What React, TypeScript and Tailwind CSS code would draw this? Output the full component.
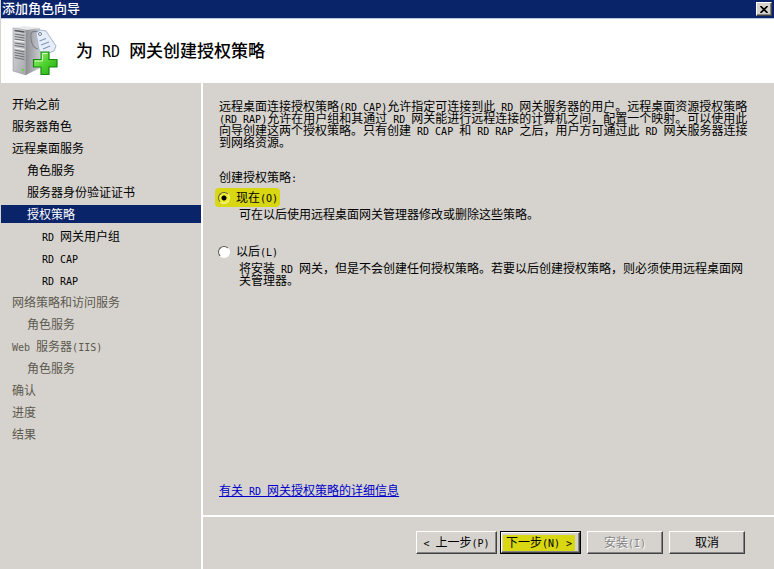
import { useState, type ReactNode } from "react";

const steps = [
  { label: "开始之前", level: 0, state: "done" },
  { label: "服务器角色", level: 0, state: "done" },
  { label: "远程桌面服务", level: 0, state: "done" },
  { label: "角色服务", level: 1, state: "done" },
  { label: "服务器身份验证证书", level: 1, state: "done" },
  { label: "授权策略", level: 1, state: "current" },
  { label: "RD 网关用户组", level: 2, state: "done" },
  { label: "RD CAP", level: 2, state: "done" },
  { label: "RD RAP", level: 2, state: "done" },
  { label: "网络策略和访问服务", level: 0, state: "pending" },
  { label: "角色服务", level: 1, state: "pending" },
  { label: "Web 服务器(IIS)", level: 0, state: "pending" },
  { label: "角色服务", level: 1, state: "pending" },
  { label: "确认", level: 0, state: "pending" },
  { label: "进度", level: 0, state: "pending" },
  { label: "结果", level: 0, state: "pending" },
];

const indents = ["pl-[11px]", "pl-[26px]", "pl-[41px]"];

const stateStyles: Record<string, string> = {
  done: "text-black",
  current: "bg-[#0a246a] text-white",
  pending: "text-[#5c594f]",
};

// Sets Latin runs in a fixed-width face, half as wide as a Chinese character.
function Mixed({ children, latin = "text-[10px]" }: { children: string; latin?: string }) {
  return (
    <>
      {children.split(/([\x20-\x7e]+)/).map((run, i) =>
        i % 2 ? (
          <span key={i} className={`font-['DejaVu_Sans_Mono',monospace] leading-2 ${latin}`}>
            {run}
          </span>
        ) : (
          run
        ),
      )}
    </>
  );
}

function ServerIcon() {
  return (
    <svg width="48" height="50" viewBox="0 0 48 50" aria-hidden="true">
      <defs>
        <linearGradient id="front" x1="0" x2="1" y1="0" y2="1">
          <stop offset="0" stopColor="#dcdde0" />
          <stop offset="1" stopColor="#a5a6ab" />
        </linearGradient>
        <linearGradient id="side" x1="0" x2="1">
          <stop offset="0" stopColor="#8f9095" />
          <stop offset="1" stopColor="#c9cace" />
        </linearGradient>
        <linearGradient id="plus" x1="0" x2="1" y1="0" y2="1">
          <stop offset="0" stopColor="#a4f07c" />
          <stop offset="0.5" stopColor="#4fd32f" />
          <stop offset="1" stopColor="#22a512" />
        </linearGradient>
      </defs>
      <path d="M1 2 12 0 28 2 14 4Z" fill="#e9eaec" />
      <path d="M14 4 28 2V42L14 49Z" fill="url(#side)" />
      <path d="M1 2 14 4V49L1 45Z" fill="url(#front)" stroke="#88898e" strokeWidth=".5" />
      <path d="M2.500 4.500 12.500 6" stroke="#55565b" strokeWidth="1.500" />
      <path d="M2.500 8 12.500 9.500M2.500 10.500 12.500 12M2.500 13 12.500 14.500M2.500 17 12.500 18.500M2.500 19.500 12.500 21M2.500 24 12.500 26M2.500 26.500 12.500 28.500M2.500 29 12.500 31M2.500 31.500 12.500 33.500" stroke="#6a6b71" strokeWidth="1" />
      <path d="M2.500 14.500 12.500 16M2.500 22 12.500 23.500" stroke="#f7f7f8" strokeWidth="1" />
      <circle cx="11" cy="44" r="1.300" fill="#63d648" />
      <path d="M27 6C20 4 18 6 19 13S22 22 26 23" fill="none" stroke="#7d8087" strokeWidth="1.200" />
      <path d="M24 7 28 4 34 5 44 20 42 25 31 29 27 24Z" fill="#e6edf7" stroke="#a3b5ce" strokeWidth="1" />
      <circle cx="28" cy="8" r="1.500" fill="#fff" stroke="#6f7c90" strokeWidth="1" />
      <path d="M27.500 15 34 12.500M29 19 37 16M31 23 38 20" stroke="#7f98bd" strokeWidth="1.200" />
      <path d="M29 26h8v7.500h8v7.500h-8v7.500h-8V41h-7.500v-7.500H29Z" fill="url(#plus)" stroke="#138a0d" strokeWidth="1.200" strokeLinejoin="round" />
      <path d="M30.500 27.500h5M23 35h7.500v-7.500" fill="none" stroke="#d2f9bd" strokeWidth="1" />
    </svg>
  );
}

const raised =
  "border border-t-white border-l-white border-r-[#424142] border-b-[#424142] shadow-[inset_-1px_-1px_0_#848284]";

function WizardButton({
  children,
  className,
  disabled,
}: {
  children: string;
  className: string;
  disabled?: boolean;
}) {
  return (
    <button
      type="button"
      disabled={disabled}
      className={`h-[23px] whitespace-pre bg-[#d6d3ce] leading-4 ${raised} ${className}`}
    >
      <Mixed>{children}</Mixed>
    </button>
  );
}

function Choice({
  id,
  label,
  checked,
  onSelect,
  className,
  children,
}: {
  id: string;
  label: string;
  checked: boolean;
  onSelect: () => void;
  className: string;
  children: ReactNode;
}) {
  return (
    <div className={className}>
      <label
        htmlFor={id}
        className={`-ml-1 flex h-[19px] w-fit items-center gap-1.5 rounded-sm pr-0.5 pl-[3px] ${checked ? "bg-[#d9d712]" : ""}`}
      >
        <input
          id={id}
          type="radio"
          name="policy"
          checked={checked}
          onChange={onSelect}
          className="size-3 appearance-none rounded-full border border-t-[#5a5955] border-r-white border-b-white border-l-[#5a5955] bg-white checked:border-r-[#f1ef9b] checked:border-b-[#f1ef9b] checked:bg-[radial-gradient(circle,#000_2px,#f0ed20_3px)]"
        />
        <span>
          <Mixed>{label}</Mixed>
        </span>
      </label>
      <p className="mt-0.5 pl-5 leading-3">{children}</p>
    </div>
  );
}

export default function App() {
  const [choice, setChoice] = useState("now");
  return (
    <div className="flex min-h-screen flex-col bg-[#d6d3ce] pl-px font-['Liberation_Sans','Noto_Sans_CJK_SC',sans-serif] text-xs leading-4 text-black">
      <div className="flex h-[18px] items-center justify-between bg-[#0a246a] pr-0.5 pl-px text-white">
        <span className="text-[13px] font-medium">添加角色向导</span>
        <button
          type="button"
          aria-label="关闭"
          className={`flex h-[14px] w-4 items-center justify-center bg-[#d6d3ce] text-black ${raised}`}
        >
          <svg width="8" height="7" viewBox="0 0 8 7" aria-hidden="true">
            <path d="M.5 0 7.500 7M7.500 0 .5 7" stroke="currentColor" strokeWidth="1.600" />
          </svg>
        </button>
      </div>

      <header className="flex h-[65px] items-center gap-4 border-t border-[#b9c6dc] bg-white pl-[11px]">
        <ServerIcon />
        <h1 className="pt-0.5 text-[17px] leading-6 font-medium">
          <Mixed latin="text-[15px]">为 RD 网关创建授权策略</Mixed>
        </h1>
      </header>

      <div className="flex flex-1">
        <nav className="w-[200px] shrink-0 pt-3">
          <ol className="flex flex-col gap-1">
            {steps.map((step, i) => (
              <li
                key={i}
                aria-current={step.state === "current" ? "step" : undefined}
                className={`h-[18px] leading-5 ${indents[step.level]} ${stateStyles[step.state]}`}
              >
                <Mixed>{step.label}</Mixed>
              </li>
            ))}
          </ol>
        </nav>

        <div className="flex min-w-0 flex-1 flex-col border-l-2 border-white">
          <main className="flex flex-1 flex-col pt-[18px] pr-6 pb-4 pl-4">
            <p className="leading-3">
              <Mixed>
                远程桌面连接授权策略(RD CAP)允许指定可连接到此 RD 网关服务器的用户。远程桌面资源授权策略(RD RAP)允许在用户组和其通过 RD 网关能进行远程连接的计算机之间，配置一个映射。可以使用此向导创建这两个授权策略。只有创建 RD CAP 和 RD RAP 之后，用户方可通过此 RD 网关服务器连接到网络资源。
              </Mixed>
            </p>
            <fieldset className="mt-[21px]">
              <legend>
                <Mixed>创建授权策略:</Mixed>
              </legend>
              <Choice
                id="now"
                label="现在(O)"
                checked={choice === "now"}
                onSelect={() => setChoice("now")}
                className="mt-0.5"
              >
                可在以后使用远程桌面网关管理器修改或删除这些策略。
              </Choice>
              <Choice
                id="later"
                label="以后(L)"
                checked={choice === "later"}
                onSelect={() => setChoice("later")}
                className="mt-[21px]"
              >
                <Mixed>
                  将安装 RD 网关，但是不会创建任何授权策略。若要以后创建授权策略，则必须使用远程桌面网关管理器。
                </Mixed>
              </Choice>
            </fieldset>
            <a href="#details" className="mt-auto w-fit text-[#0000c8] underline">
              <Mixed>有关 RD 网关授权策略的详细信息</Mixed>
            </a>
          </main>

          <footer className="flex justify-end border-t-2 border-white pt-3.5 pr-[29px] pb-[15px]">
            <WizardButton className="w-[81px]">{"< 上一步(P)"}</WizardButton>
            <div className="ml-[3px] w-[81px] border border-black">
              <button
                type="button"
                className={`flex h-[21px] w-full items-center whitespace-pre bg-[#d6d3ce] pr-1 pl-px leading-4 ${raised}`}
              >
                <span className="w-full bg-[#d9d712] text-center">
                  <Mixed>{"下一步(N) >"}</Mixed>
                </span>
              </button>
            </div>
            <WizardButton
              disabled
              className="ml-1.5 w-[76px] text-[#848284] [text-shadow:1px_1px_0_#fff]"
            >
              安装(I)
            </WizardButton>
            <WizardButton className="ml-1.5 w-[76px]">取消</WizardButton>
          </footer>
        </div>
      </div>
    </div>
  );
}
